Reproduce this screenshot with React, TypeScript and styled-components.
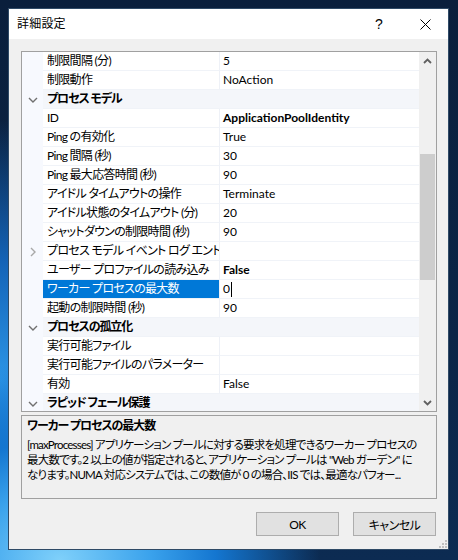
import React from "react";
import styled, { createGlobalStyle } from "styled-components";

const GlobalStyle = createGlobalStyle`
  html, body { margin: 0; padding: 0; }
  body {
    font-family: "Lato", "Noto Sans CJK JP", sans-serif;
    font-size: 12px;
    font-feature-settings: "palt" 1;
    color: #000;
  }
  * { box-sizing: border-box; }
`;

const Desktop = styled.div`
  width: 458px;
  height: 560px;
  padding: 8px 9px 10px 8px;
  overflow: hidden;
  background:
    radial-gradient(ellipse 260px 200px at 60px 560px, #7fd0fa 0%, #3aa2ec 35%, #1476d0 60%, rgba(20, 100, 200, 0) 100%),
    radial-gradient(ellipse 200px 260px at 0px 380px, #2c95e6 0%, #1464b8 45%, rgba(10, 40, 80, 0) 100%),
    linear-gradient(180deg, #0a1f3c 0%, #0b2547 60%, #0c2b52 100%);
`;

const Window = styled.div`
  width: 441px;
  height: 542px;
  border: 1px solid #2f4a66;
  background: #f0f0f0;
  display: flex;
  flex-direction: column;
  position: relative;
`;

const TitleBar = styled.div`
  height: 30px;
  background: #ffffff;
  display: flex;
  align-items: center;
  padding-left: 8px;
  flex-shrink: 0;
`;

const TitleText = styled.div`
  flex: 1;
  font-size: 12px;
  line-height: 16px;
  letter-spacing: 0.2px;
`;

const CaptionButton = styled.div`
  width: 46px;
  height: 30px;
  display: flex;
  align-items: center;
  justify-content: center;
  font-family: "Liberation Sans", sans-serif;
  font-size: 14px;
`;

const Body = styled.div`
  flex: 1;
  display: flex;
  flex-direction: column;
  padding: 12px 11px 0 12px;
`;

const Grid = styled.div`
  height: 361px;
  border: 1px solid #a0a0a0;
  background: #ffffff;
  display: flex;
  flex-shrink: 0;
`;

const Rows = styled.div`
  flex: 1;
  overflow: hidden;
  display: flex;
  flex-direction: column;
`;

const Row = styled.div`
  display: grid;
  grid-template-columns: 21px 177px 1fr;
  height: 19px;
  flex-shrink: 0;
`;

const Gutter = styled.div`
  background: #f7f9fe;
  display: flex;
  align-items: center;
  justify-content: center;
`;

const LabelCell = styled.div<{ $selected?: boolean; $category?: boolean }>`
  grid-column: ${(p) => (p.$category ? "2 / 4" : "auto")};
  padding-left: 4px;
  white-space: nowrap;
  overflow: hidden;
  line-height: 18px;
  letter-spacing: ${(p) => (p.$category ? "-1.1px" : "-0.7px")};
  border-bottom: 1px solid #f0f3f8;
  border-right: ${(p) => (p.$category ? "none" : "1px solid #eef1f7")};
  background: ${(p) => (p.$selected ? "#0078d7" : p.$category ? "#f4f6fa" : "#ffffff")};
  color: ${(p) => (p.$selected ? "#ffffff" : "#000000")};
  font-weight: ${(p) => (p.$category ? 700 : 400)};
`;

const ValueCell = styled.div<{ $bold?: boolean }>`
  padding-left: 3px;
  white-space: nowrap;
  overflow: hidden;
  line-height: 18px;
  border-bottom: 1px solid #f0f3f8;
  font-weight: ${(p) => (p.$bold ? 700 : 400)};
  display: flex;
  align-items: center;
`;

const Caret = styled.span`
  display: inline-block;
  width: 1px;
  height: 15px;
  background: #000;
  margin-left: 1px;
`;

const ScrollBar = styled.div`
  width: 17px;
  background: #f0f0f0;
  display: flex;
  flex-direction: column;
  flex-shrink: 0;
`;

const ScrollArrow = styled.div`
  height: 17px;
  display: flex;
  align-items: center;
  justify-content: center;
  flex-shrink: 0;
`;

const ScrollTrack = styled.div`
  flex: 1;
  display: flex;
  flex-direction: column;
  align-items: center;
`;

const Thumb = styled.div`
  width: 15px;
  height: 126px;
  margin-top: 85px;
  background: #cdcdcd;
`;

const Description = styled.div`
  margin-top: 3px;
  height: 84px;
  border: 1px solid #a0a0a0;
  background: #f0f0f0;
  padding: 2px 4px 0 5px;
  overflow: hidden;
  flex-shrink: 0;
`;

const DescTitle = styled.div`
  font-weight: 700;
  line-height: 16px;
  margin-bottom: 3px;
  letter-spacing: -1.1px;
`;

const DescLine = styled.div`
  font-size: 11.5px;
  letter-spacing: -0.8px;
  line-height: 15px;
  white-space: nowrap;
  overflow: hidden;
`;

const ButtonRow = styled.div`
  display: flex;
  justify-content: flex-end;
  gap: 14px;
  margin-top: 13px;
  padding-right: 1px;
`;

const Button = styled.div`
  width: 83px;
  height: 24px;
  background: #e1e1e1;
  border: 1px solid #adadad;
  display: flex;
  align-items: center;
  justify-content: center;
  font-size: 12px;
  letter-spacing: -0.5px;
`;

const Grip = styled.svg`
  position: absolute;
  right: 1px;
  bottom: 1px;
`;

const ChevronDown = () => (
  <svg width="10" height="6" viewBox="0 0 10 6">
    <path d="M1 1 L5 5 L9 1" fill="none" stroke="#707070" strokeWidth="1.4" />
  </svg>
);

const ChevronRight = () => (
  <svg width="6" height="10" viewBox="0 0 6 10">
    <path d="M1 1 L5 5 L1 9" fill="none" stroke="#a8a8a8" strokeWidth="1.4" />
  </svg>
);

const ArrowUp = () => (
  <svg width="9" height="6" viewBox="0 0 9 6">
    <path d="M1 5 L4.5 1.5 L8 5" fill="none" stroke="#606060" strokeWidth="1.8" />
  </svg>
);

const ArrowDown = () => (
  <svg width="9" height="6" viewBox="0 0 9 6">
    <path d="M1 1 L4.5 4.5 L8 1" fill="none" stroke="#606060" strokeWidth="1.8" />
  </svg>
);

type Item =
  | { kind: "cat"; label: string }
  | {
      kind: "prop";
      label: string;
      value: string;
      bold?: boolean;
      selected?: boolean;
      expandable?: boolean;
      editing?: boolean;
    };

const items: Item[] = [
  { kind: "prop", label: "制限間隔 (分)", value: "5" },
  { kind: "prop", label: "制限動作", value: "NoAction" },
  { kind: "cat", label: "プロセス モデル" },
  { kind: "prop", label: "ID", value: "ApplicationPoolIdentity", bold: true },
  { kind: "prop", label: "Ping の有効化", value: "True" },
  { kind: "prop", label: "Ping 間隔 (秒)", value: "30" },
  { kind: "prop", label: "Ping 最大応答時間 (秒)", value: "90" },
  { kind: "prop", label: "アイドル タイムアウトの操作", value: "Terminate" },
  { kind: "prop", label: "アイドル状態のタイムアウト (分)", value: "20" },
  { kind: "prop", label: "シャットダウンの制限時間 (秒)", value: "90" },
  { kind: "prop", label: "プロセス モデル イベント ログ エントリの生成", value: "", expandable: true },
  { kind: "prop", label: "ユーザー プロファイルの読み込み", value: "False", bold: true },
  { kind: "prop", label: "ワーカー プロセスの最大数", value: "0", selected: true, editing: true },
  { kind: "prop", label: "起動の制限時間 (秒)", value: "90" },
  { kind: "cat", label: "プロセスの孤立化" },
  { kind: "prop", label: "実行可能ファイル", value: "" },
  { kind: "prop", label: "実行可能ファイルのパラメーター", value: "" },
  { kind: "prop", label: "有効", value: "False" },
  { kind: "cat", label: "ラピッド フェール保護" },
];

export default function App() {
  return (
    <>
      <GlobalStyle />
      <Desktop>
        <Window>
          <TitleBar>
            <TitleText>詳細設定</TitleText>
            <CaptionButton>?</CaptionButton>
            <CaptionButton>
              <svg width="11" height="11" viewBox="0 0 11 11">
                <path d="M0.5 0.5 L10.5 10.5 M10.5 0.5 L0.5 10.5" stroke="#000" strokeWidth="1" />
              </svg>
            </CaptionButton>
          </TitleBar>
          <Body>
            <Grid>
              <Rows>
                {items.map((it, i) =>
                  it.kind === "cat" ? (
                    <Row key={i}>
                      <Gutter>
                        <ChevronDown />
                      </Gutter>
                      <LabelCell $category>{it.label}</LabelCell>
                    </Row>
                  ) : (
                    <Row key={i}>
                      <Gutter>{it.expandable ? <ChevronRight /> : null}</Gutter>
                      <LabelCell $selected={it.selected}>{it.label}</LabelCell>
                      <ValueCell $bold={it.bold}>
                        {it.value}
                        {it.editing ? <Caret /> : null}
                      </ValueCell>
                    </Row>
                  )
                )}
              </Rows>
              <ScrollBar>
                <ScrollArrow>
                  <ArrowUp />
                </ScrollArrow>
                <ScrollTrack>
                  <Thumb />
                </ScrollTrack>
                <ScrollArrow>
                  <ArrowDown />
                </ScrollArrow>
              </ScrollBar>
            </Grid>
            <Description>
              <DescTitle>ワーカー プロセスの最大数</DescTitle>
              <DescLine>[maxProcesses] アプリケーション プールに対する要求を処理できるワーカー プロセスの</DescLine>
              <DescLine>最大数です。2 以上の値が指定されると、アプリケーション プールは "Web ガーデン" に</DescLine>
              <DescLine>なります。NUMA 対応システムでは、この数値が 0 の場合、IIS では、最適なパフォー...</DescLine>
            </Description>
            <ButtonRow>
              <Button>OK</Button>
              <Button>キャンセル</Button>
            </ButtonRow>
          </Body>
          <Grip width="8" height="8" viewBox="0 0 8 8">
            <rect x="6" y="0" width="2" height="2" fill="#c0c0c0" />
            <rect x="3" y="3" width="2" height="2" fill="#c0c0c0" />
            <rect x="6" y="3" width="2" height="2" fill="#c0c0c0" />
            <rect x="0" y="6" width="2" height="2" fill="#c0c0c0" />
            <rect x="3" y="6" width="2" height="2" fill="#c0c0c0" />
            <rect x="6" y="6" width="2" height="2" fill="#c0c0c0" />
          </Grip>
        </Window>
      </Desktop>
    </>
  );
}
